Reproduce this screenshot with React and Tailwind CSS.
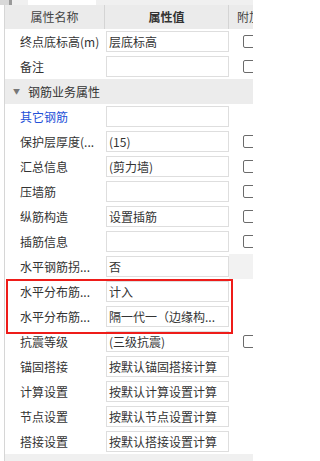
const rows = [
  { name: '终点底标高(m)', value: '层底标高', check: true },
  { name: '备注', value: '', check: true },
  { section: '钢筋业务属性' },
  { name: '其它钢筋', value: '', link: true },
  { name: '保护层厚度(...', value: '(15)', check: true },
  { name: '汇总信息', value: '(剪力墙)', check: true },
  { name: '压墙筋', value: '', check: true },
  { name: '纵筋构造', value: '设置插筋', check: true },
  { name: '插筋信息', value: '', check: true },
  { name: '水平钢筋拐...', value: '否', shaded: true },
  { name: '水平分布筋...', value: '计入' },
  { name: '水平分布筋...', value: '隔一代一（边缘构...' },
  { name: '抗震等级', value: '(三级抗震)', check: true },
  { name: '锚固搭接', value: '按默认锚固搭接计算' },
  { name: '计算设置', value: '按默认计算设置计算' },
  { name: '节点设置', value: '按默认节点设置计算' },
  { name: '搭接设置', value: '按默认搭接设置计算' },
];

function Row({ row }) {
  if (row.section) {
    return (
      <div className="flex h-[25px] items-center bg-[#ececec]">
        <span className="ml-[8px] mr-[8px] text-[7px] leading-none text-[#777]">▼</span>
        <span className="text-[12px] leading-none text-[#333]">{row.section}</span>
      </div>
    );
  }
  return (
    <div className="grid h-[25px] grid-cols-[100px_124px_1fr]">
      <div className={`flex items-center overflow-hidden whitespace-nowrap pl-[15px] text-[12px] leading-none ${row.link ? 'text-[#2350d8]' : 'text-[#333]'}`}>
        {row.name}
      </div>
      <div className="flex items-center pl-[1px]">
        <div className="flex h-[21px] w-[123px] items-center overflow-hidden whitespace-nowrap border border-[#dedede] bg-white pl-[2px] text-[12px] leading-none text-[#333]">
          {row.value}
        </div>
      </div>
      <div className={`flex items-center pl-[14px] ${row.shaded ? 'bg-[#f2f2f2]' : ''}`}>
        {row.check && <div className="size-[13px] shrink-0 rounded-[2px] border border-[#6b6b6b] bg-white" />}
      </div>
    </div>
  );
}

export default function App() {
  return (
    <div
      className="relative h-[461px] w-[253px] overflow-hidden bg-white"
      style={{ fontFamily: '"Noto Sans CJK SC", "Microsoft YaHei", sans-serif' }}
    >
      {/* toolbar remnant */}
      <div className="flex h-[5px] bg-[#f0f0f0]">
        <div className="w-[9px] bg-[#d8d8d8]" />
        <div className="w-[3px] bg-[#9a9a9a]" />
        <div className="w-[16px]" />
        <div className="w-[68px] bg-white" />
      </div>

      <div className="ml-[4px] flex h-[456px] flex-col border-l border-[#d6d6d6]">
        <div className="grid h-[24px] grid-cols-[100px_124px_1fr] bg-[#ebebeb] text-[12px] leading-none">
          <div className="flex items-center justify-center border-r border-[#d4d4d4] text-[#444]">属性名称</div>
          <div className="flex items-center justify-center border-r border-[#d4d4d4] font-bold text-[#333]">属性值</div>
          <div className="flex items-center overflow-hidden whitespace-nowrap pl-[8px] text-[#444]">附加</div>
        </div>
        {rows.map((row, i) => (
          <Row key={i} row={row} />
        ))}
        <div className="flex-1 bg-[#f0f0f0]" />
      </div>

      {/* red highlight annotation */}
      <div className="pointer-events-none absolute left-[6px] top-[279px] h-[55px] w-[227px] border-2 border-[#ee1c19]" />
    </div>
  );
}
